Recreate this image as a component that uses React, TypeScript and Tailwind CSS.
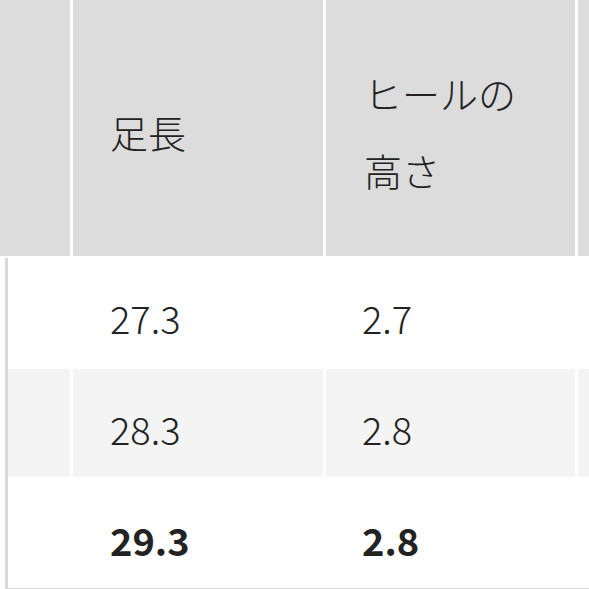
const font = { fontFamily: '"Noto Sans CJK JP", "Noto Sans", sans-serif' }

const rows = [
  { foot: '27.3', heel: '2.7', bg: 'bg-white', bold: false },
  { foot: '28.3', heel: '2.8', bg: 'bg-[#f4f4f4]', bold: false },
  { foot: '29.3', heel: '2.8', bg: 'bg-white', bold: true },
]

export default function App() {
  return (
    <div className="w-[589px] h-[589px] overflow-hidden bg-white text-[#222]" style={font}>
      {/* Header */}
      <div className="flex gap-[3px] h-[256px]">
        <div className="w-[70px] shrink-0 bg-[#dcdcdc]" />
        <div className="w-[250px] shrink-0 bg-[#dcdcdc] flex items-center pl-[37px] pt-[6px]">
          <span className="text-[38px] leading-[77px] font-light">足長</span>
        </div>
        <div className="w-[249px] shrink-0 bg-[#dcdcdc] flex items-center pl-[38px] pt-[6px]">
          <span className="text-[38px] leading-[77px] font-light">
            ヒールの
            <br />
            高さ
          </span>
        </div>
        <div className="flex-1 bg-[#dcdcdc]" />
      </div>

      {/* Body */}
      <div className="mt-[2px] ml-[5px] border-l-[3px] border-[#d8d8d8] border-b-2 flex flex-col gap-[3px]">
        {rows.map((r, i) => (
          <div key={i} className="flex gap-[3px] h-[108px]">
            <div className={`w-[62px] shrink-0 ${r.bg}`} />
            <div className={`w-[250px] shrink-0 ${r.bg} flex items-center pl-[37px] pt-[12px]`}>
              <span className={`text-[38px] leading-none ${r.bold ? 'font-bold' : 'font-light'}`}>{r.foot}</span>
            </div>
            <div className={`w-[249px] shrink-0 ${r.bg} flex items-center pl-[36px] pt-[12px]`}>
              <span className={`text-[38px] leading-none ${r.bold ? 'font-bold' : 'font-light'}`}>{r.heel}</span>
            </div>
            <div className={`flex-1 ${r.bg}`} />
          </div>
        ))}
      </div>
    </div>
  )
}
